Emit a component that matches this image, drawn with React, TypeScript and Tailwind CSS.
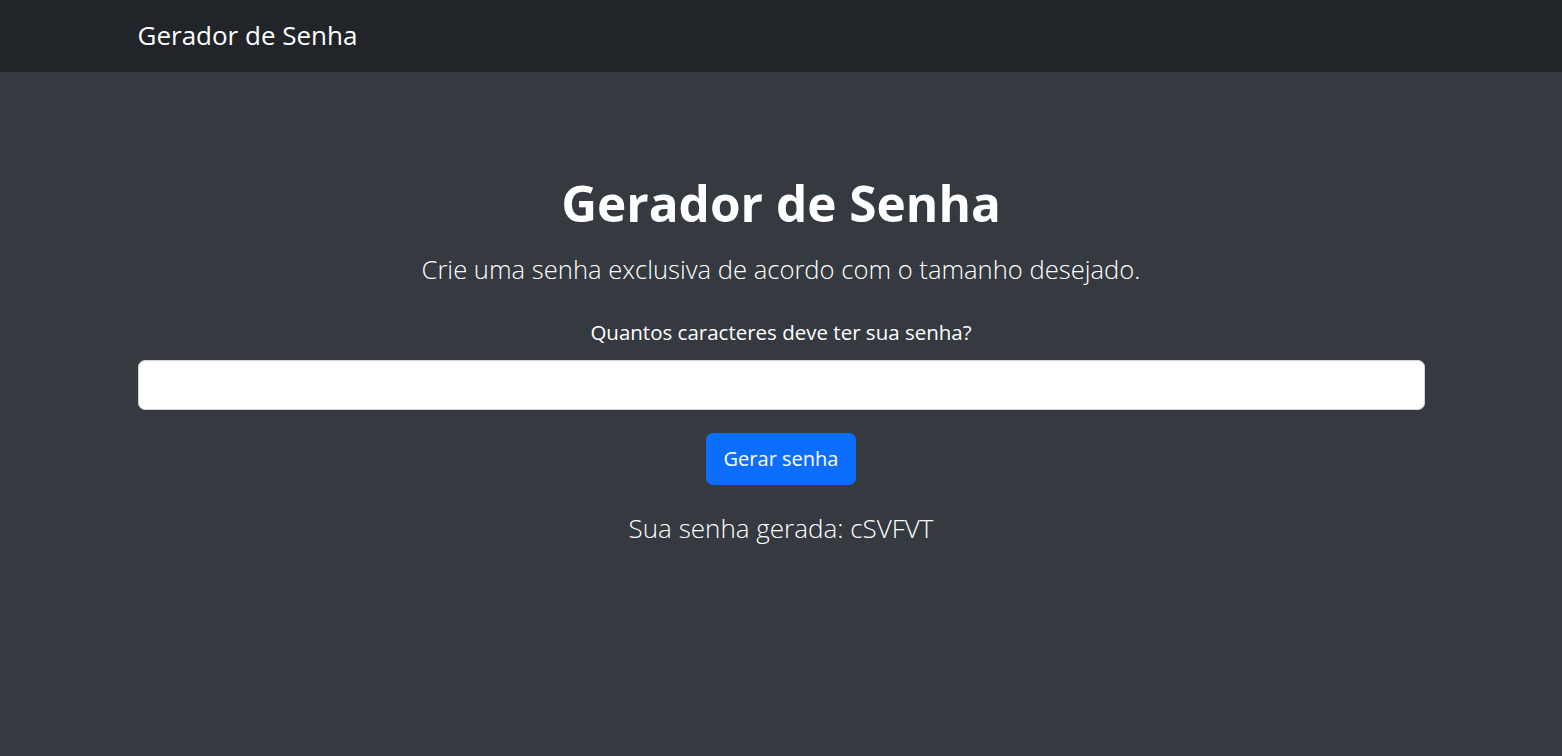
import { useState } from "react";

const App = () => {
  const [size, setSize] = useState("");

  return (
    <div className="min-h-screen bg-[#343a40] font-['Open_Sans',sans-serif] text-white">
      <nav className="h-[72px] bg-[#212529] flex items-center">
        <div className="w-[1287px] mx-auto">
          <span className="text-[26px] leading-none">Gerador de Senha</span>
        </div>
      </nav>
      <main className="w-[1287px] mx-auto pt-[102px] flex flex-col items-center text-center">
        <h1 className="text-[49.5px] font-bold leading-[1.2]">Gerador de Senha</h1>
        <p className="mt-[18px] text-[25.6px] font-light leading-[1.5]">
          Crie uma senha exclusiva de acordo com o tamanho desejado.
        </p>
        <label htmlFor="tamanho" className="mt-[27px] text-[20.5px] font-medium leading-[1.5]">
          Quantos caracteres deve ter sua senha?
        </label>
        <input
          id="tamanho"
          type="number"
          value={size}
          onChange={(e) => setSize(e.target.value)}
          className="mt-[12px] w-full h-[50px] rounded-[7px] border border-[#ced4da] bg-white px-4 text-[#212529] outline-none"
        />
        <button className="mt-[23px] h-[52px] px-[18px] rounded-[7px] bg-[#0d6efd] text-[20px] leading-none">
          Gerar senha
        </button>
        <p className="mt-[24px] text-[26px] font-light leading-[1.5]">
          Sua senha gerada: cSVFVT
        </p>
      </main>
    </div>
  );
};

export default App;
